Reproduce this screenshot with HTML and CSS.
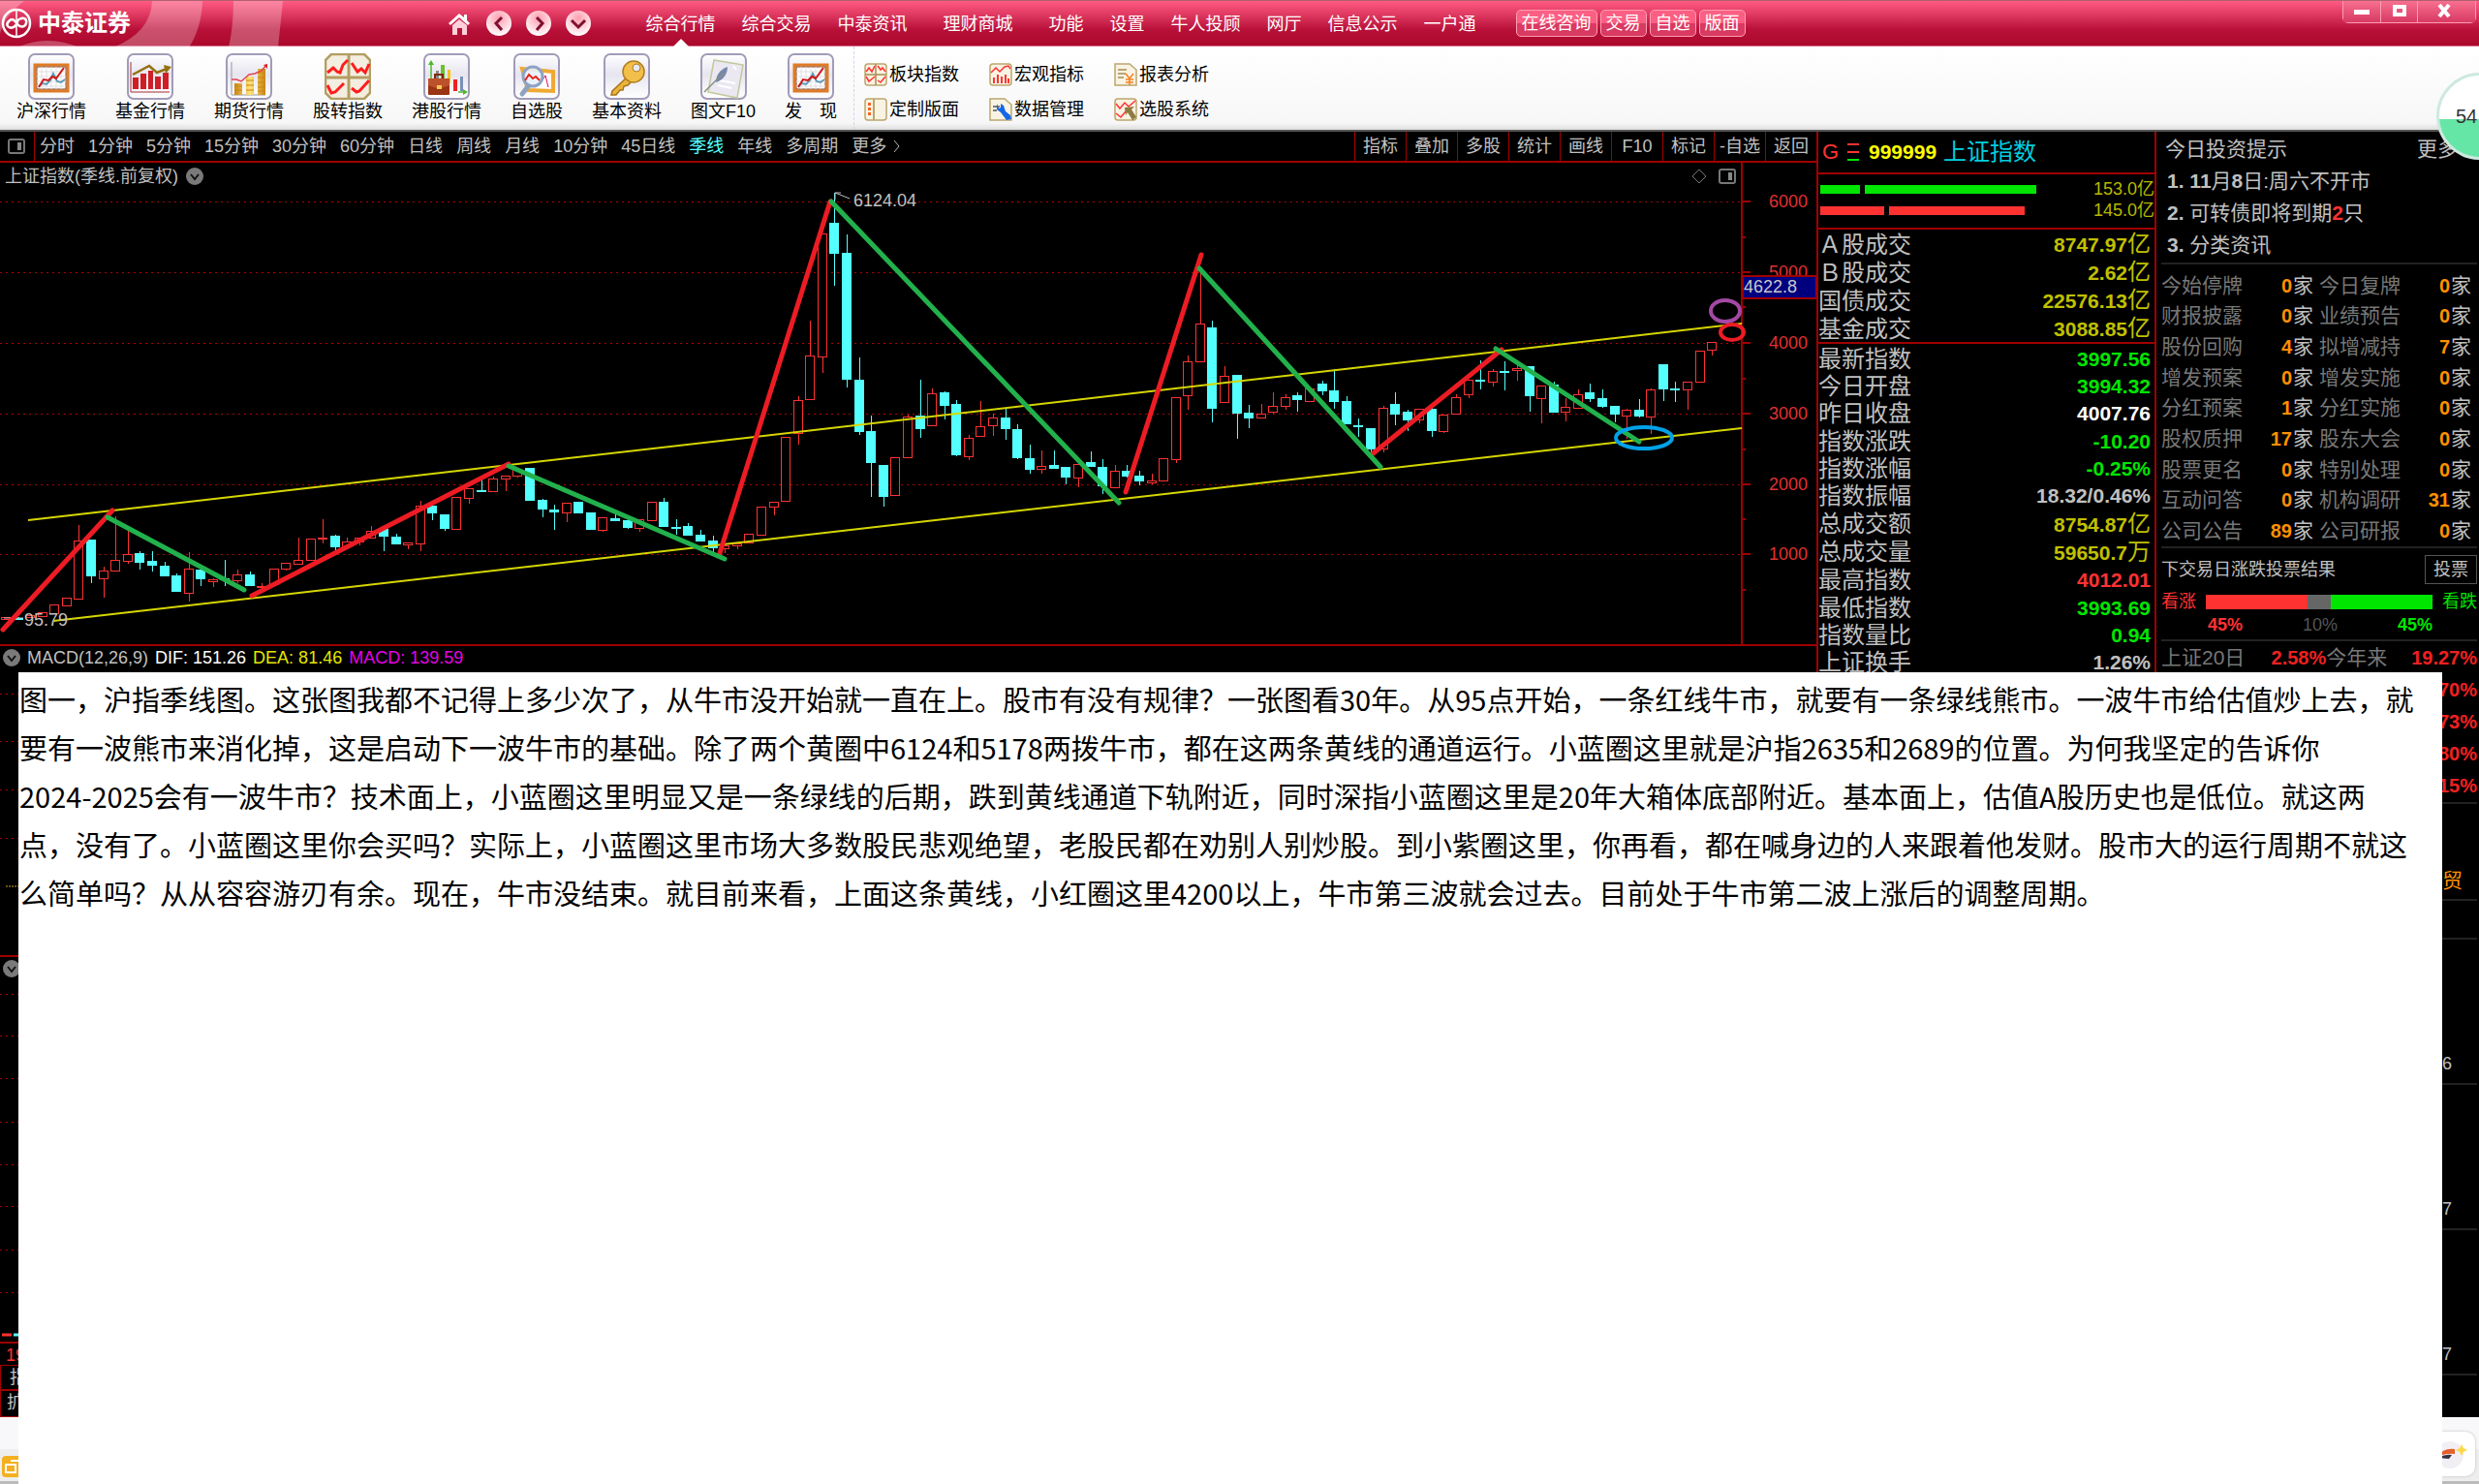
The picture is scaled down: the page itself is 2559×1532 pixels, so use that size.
FILE: index.html
```html
<!DOCTYPE html>
<html lang="zh-CN">
<head>
    <meta charset="UTF-8">
    <meta name="viewport" content="width=device-width, initial-scale=1.0">
    <title>中泰证券</title>
    <link rel="stylesheet" href="styles.css">
</head>
<body>

<svg class="symbols" aria-hidden="true">
    <defs>
        <linearGradient id="tile" x1="0" y1="0" x2="0" y2="1"><stop offset="0" stop-color="#fff"/><stop offset=".45" stop-color="#e6e5f0"/><stop offset="1" stop-color="#fff"/></linearGradient>
        <linearGradient id="gold" x1="0" y1="0" x2="1" y2="0"><stop offset="0" stop-color="#c98512"/><stop offset=".5" stop-color="#ffe27a"/><stop offset="1" stop-color="#c98512"/></linearGradient>
        <radialGradient id="ball" cx=".5" cy=".3" r=".7"><stop offset="0" stop-color="#ff9dae"/><stop offset="1" stop-color="#fff"/></radialGradient>
    </defs>
    <symbol id="frame" viewBox="0 0 48 48"><rect x="1" y="1" width="46" height="46" rx="6" fill="url(#tile)" stroke="#a29bb8" stroke-width="2"/></symbol>
    <symbol id="i-board" viewBox="0 0 48 48">
        <use href="#frame"/>
        <rect x="7" y="12" width="34" height="27" fill="#fff" stroke="#e07b24" stroke-width="3"/>
        <rect x="9" y="14" width="30" height="23" fill="none" stroke="#8a3d10"/>
        <path d="M14 14v23M19 14v23M24 14v23M29 14v23M34 14v23M9 19h30M9 24h30M9 29h30M9 34h30" stroke="#dfdfe4" fill="none"/>
        <path d="M11 34l4-3 4 1 4-4 3-7 4 8 4 1 4-3" fill="none" stroke="#5d9bb8" stroke-width="2"/>
        <path d="M11 35l5-8 5 1 4-4 4 2 8-11" fill="none" stroke="#d01818" stroke-width="2"/>
    </symbol>
    <symbol id="i-fund" viewBox="0 0 48 48">
        <use href="#frame"/>
        <path d="M4 9v31h40" fill="none" stroke="#a33" stroke-width="1"/>
        <path d="M6 25h6v12H6zM14 21h6v16h-6zM22 18h5v19h-5zM29 24h6v13h-6zM37 20h6v17h-6z" fill="#cf1f25"/>
        <path d="M6 22l17-9 8 7 10-4" fill="none" stroke="#94700f" stroke-width="2.5"/><path d="M38 12l8 2-6 7z" fill="#94700f"/>
    </symbol>
    <symbol id="i-futures" viewBox="0 0 48 48">
        <use href="#frame"/>
        <path d="M6 9v34h35" fill="none" stroke="#999"/>
        <path d="M9 31h8v12H9zM21 24h8v19h-8zM33 16h8v27h-8z" fill="url(#gold)"/>
        <path d="M9 34h8M9 38h8M21 28h8M21 33h8M21 38h8M33 20h8M33 25h8M33 30h8M33 35h8M33 39h8" stroke="#c98512"/>
        <path d="M6 27h5l5 2 8-7 6-1 7-3 5-6" fill="none" stroke="#dd4455" stroke-width="1.5"/><path d="M39 12l4-1v5z" fill="#d22"/>
    </symbol>
    <symbol id="i-grid" viewBox="0 0 48 48">
        <path d="M7 1h34l6 6v34l-6 6H7l-6-6V7z" fill="#f3eee0" stroke="#b39d62" stroke-width="2.5"/>
        <path d="M25 1v46M1 25h46" stroke="#b39d62" stroke-width="3"/>
        <path d="M3 20l6-5 4 4 3 1 3-8 5-5M28 10l6 9 4-3 4 4 4-9M3 33l4 8 4-1 9-9M28 36l5 4 3-1 10-11" fill="none" stroke="#ff1d1d" stroke-width="3"/>
    </symbol>
    <symbol id="i-hk" viewBox="0 0 48 48">
        <use href="#frame"/>
        <path d="M8 26V10M36 40h8" stroke="#4db82e" stroke-width="1.5"/><path d="M8 7l3 5H5zM46 40l-5-3v6z" fill="#4db82e"/>
        <path d="M13 18h3v8h-3z" fill="#888"/><path d="M18 12h4v14h-4z" fill="#6cc22c"/><path d="M25 17h3v14h-3z" fill="#f7c11e"/><path d="M31 27h4v12h-4z" fill="#e22"/><path d="M38 24h3v15h-3z" fill="#7b92b5"/>
        <rect x="5" y="26" width="22" height="17" rx="1" fill="#9a3412"/><path d="M5 26h22v7l-11 4-11-4z" fill="#bd512b"/><path d="M12 26v-4h8v4" fill="none" stroke="#7d2a10" stroke-width="2"/><rect x="14" y="33" width="5" height="4" fill="#f4c95a"/>
    </symbol>
    <symbol id="i-watch" viewBox="0 0 48 48">
        <use href="#frame"/>
        <path d="M9 16l32 3v20l-26-1z" fill="#fff" stroke="#efa932" stroke-width="4"/><path d="M29 29l4-6 3 12" fill="none" stroke="#e05" />
        <path d="M16 33l-7 9" stroke="#8fa3bd" stroke-width="5" stroke-linecap="round"/>
        <circle cx="20" cy="24" r="10" fill="#e8f1fb" fill-opacity=".9" stroke="#8da3c4" stroke-width="3"/>
        <path d="M12 28l4-6 4 4 3-2 4 4" fill="none" stroke="#e8241d" stroke-width="2"/>
    </symbol>
    <symbol id="i-key" viewBox="0 0 48 48">
        <use href="#frame"/>
        <path d="M24 25L9 39l-1 4h5l4-5h3l1-4 4-1 4-4" fill="#e9b53d" stroke="#a8741a" stroke-width="1.5"/>
        <circle cx="31" cy="19" r="11" fill="#f2c04a" stroke="#b27d20" stroke-width="1.5"/><circle cx="34" cy="15" r="4" fill="#e9e8f0" stroke="#b27d20"/>
    </symbol>
    <symbol id="i-note" viewBox="0 0 48 48">
        <use href="#frame"/>
        <path d="M14 7l30 5-6 34-30-6z" fill="#ebe8f2" stroke="#c3c79b" stroke-width="1.5"/>
        <path d="M20 28l16 3M18 33l14 3M34 13l3 4" stroke="#fff" stroke-width="2"/>
        <path d="M28 14c-9 3-12 10-12 16 7-2 12-8 12-16z" fill="#7788ad"/><path d="M24 20L4 40" stroke="#85907f" stroke-width="1.5"/>
    </symbol>
    <symbol id="m-page" viewBox="0 0 24 24"><rect x="1" y="1" width="22" height="22" rx="3" fill="#f8f3e3" stroke="#bba66d" stroke-width="1.5"/></symbol>
    <symbol id="m-grid" viewBox="0 0 24 24"><use href="#m-page"/><path d="M12 1v22M1 12h22" stroke="#a48d50" stroke-width="1.5"/><path d="M2 9l3-4 3 4 3-6M14 3l3 4 2-2 3 4M2 14l3 5 6-5M14 18l3 2 5-6" fill="none" stroke="#f33" stroke-width="1.5"/></symbol>
    <symbol id="m-macro" viewBox="0 0 24 24"><use href="#m-page"/><path d="M2 10l5-5 4 4 5-5 4-1 2 3" fill="none" stroke="#f33" stroke-width="1.5"/><path d="M5 21v-6M9 21v-9M13 21v-7M17 21v-9M20 21v-5" stroke="#f33" stroke-width="2"/></symbol>
    <symbol id="m-report" viewBox="0 0 24 24"><path d="M1 1h15l7 6v16H1z" fill="#f8f3e3" stroke="#bba66d" stroke-width="1.5"/><path d="M4 7h9M4 11h8M4 15h6" stroke="#a48d50" stroke-width="1.5"/><path d="M12 11l4 5 4-5M16 16v7M12 17h8M12 20h8" fill="none" stroke="#f6821f" stroke-width="1.5"/></symbol>
    <symbol id="m-layout" viewBox="0 0 24 24"><use href="#m-page"/><path d="M10 1v22" stroke="#bba66d" stroke-width="2"/><path d="M4 5h3v3H4zM4 10h3v3H4zM4 15h3v3H4z" fill="#f6641f"/></symbol>
    <symbol id="m-data" viewBox="0 0 24 24"><path d="M1 1h15l7 6v16H1z" fill="#f8f3e3" stroke="#bba66d" stroke-width="1.5"/><path d="M4 9h7M4 13h4" stroke="#555" stroke-width="1.5"/><path d="M8 6v6l4 3 6 8 5-1-1-4-5-4-2-6-3-2v4l-2 1z" fill="#1667e8"/></symbol>
    <symbol id="m-pick" viewBox="0 0 24 24"><use href="#m-page"/><path d="M2 6l4 5 5-6 4 4 7-6M2 16l5 4 5-6 4-2" fill="none" stroke="#f33" stroke-width="1.5"/><path d="M11 10l10-1-3 3 5 8-4 3-5-8-2 3z" fill="#8f7a40"/></symbol>
    <symbol id="v-down" viewBox="0 0 18 18"><circle cx="9" cy="9" r="9" fill="#7a7a7a"/><path d="M5 7l4 5 4-5" fill="none" stroke="#111" stroke-width="2"/></symbol>
    <symbol id="panel" viewBox="0 0 18 16"><rect x="1" y="1" width="16" height="14" rx="2" fill="none" stroke="#777" stroke-width="2"/><rect x="10" y="4" width="4" height="8" fill="#888"/></symbol>
</svg>

<div class="terminal">
    <header class="titlebar">
        <svg class="art" width="320" height="48" aria-hidden="true">
            <path d="M0 0H25Q4 16 0 34zM18 48Q48 34 82 48zM157 0H209Q208 28 195 48H117Q156 32 157 0zM241 0H292L287 48H236Q241 26 241 0z" fill="#fff" fill-opacity=".27"/>
        </svg>
        <div class="brand">
            <svg width="32" height="32" viewBox="0 0 32 32" aria-hidden="true">
                <g fill="none" stroke="#fff"><circle cx="16" cy="16" r="14" stroke-width="2.5"/><path d="M16 2v7M16 23v7M16 9v14" stroke-width="1.5"/><path d="M19 12c5-3 8 0 7 4s-6 5-9 1-5-7-9-3 0 8 5 6 3-8 6-8" stroke-width="2.5"/></g>
            </svg>
            <strong>中泰证券</strong>
        </div>
        <div class="shortcuts">
            <button aria-label="首页"><svg width="27" height="27" viewBox="0 0 27 27"><path d="M13 3L2 13l2 2 9-8 9 8 2-2-3-3V4h-3v3z" fill="#fff"/><path d="M6 15l7-6 8 6v10h-5v-7h-5v7H6z" fill="#ffd0d9"/></svg></button>
            <button aria-label="后退"><svg width="27" height="27" viewBox="0 0 27 27"><circle cx="13" cy="13" r="13" fill="url(#ball)"/><path d="M16 7l-6 6 6 7" fill="none" stroke="#7d1030" stroke-width="3"/></svg></button>
            <button aria-label="前进"><svg width="27" height="27" viewBox="0 0 27 27"><circle cx="13" cy="13" r="13" fill="url(#ball)"/><path d="M11 7l6 6-6 7" fill="none" stroke="#7d1030" stroke-width="3"/></svg></button>
            <button aria-label="展开"><svg width="27" height="27" viewBox="0 0 27 27"><circle cx="13" cy="13" r="13" fill="url(#ball)"/><path d="M6 10l7 7 7-7" fill="none" stroke="#7d1030" stroke-width="3"/></svg></button>
        </div>
        <nav class="menu">
            <a href="#" class="current">综合行情</a>
            <a href="#">综合交易</a>
            <a href="#">中泰资讯</a>
            <a href="#" class="wide">理财商城</a>
            <a href="#" class="wide">功能</a>
            <a href="#">设置</a>
            <a href="#">牛人投顾</a>
            <a href="#">网厅</a>
            <a href="#">信息公示</a>
            <a href="#">一户通</a>
        </nav>
        <div class="pills">
            <button>在线咨询</button>
            <button>交易</button>
            <button>自选</button>
            <button>版面</button>
        </div>
        <div class="window-buttons">
            <button aria-label="最小化"><svg width="16" height="14"><path d="M0 6h16v5H0z" fill="#fff"/></svg></button>
            <button aria-label="还原"><svg width="16" height="14"><path d="M1 1h14v12H1zM5 5v4h6V5z" fill="#fff" fill-rule="evenodd"/></svg></button>
            <button class="close" aria-label="关闭"><svg width="16" height="14"><path d="M3 1l10 12M13 1L3 13" stroke="#fff" stroke-width="4"/></svg></button>
        </div>
    </header>

    <div class="toolbar">
        <div class="tools">
            <button><svg><use href="#i-board"/></svg>沪深行情</button>
            <button><svg><use href="#i-fund"/></svg>基金行情</button>
            <button><svg><use href="#i-futures"/></svg>期货行情</button>
            <button><svg><use href="#i-grid"/></svg>股转指数</button>
            <button><svg><use href="#i-hk"/></svg>港股行情</button>
            <button><svg><use href="#i-watch"/></svg>自选股</button>
            <button><svg><use href="#i-key"/></svg>基本资料</button>
            <button><svg><use href="#i-note"/></svg>图文F10</button>
            <button><svg><use href="#i-board"/></svg>发　现</button>
        </div>
        <div class="mini-tools">
            <button><svg><use href="#m-grid"/></svg>板块指数</button>
            <button><svg><use href="#m-macro"/></svg>宏观指标</button>
            <button><svg><use href="#m-report"/></svg>报表分析</button>
            <button><svg><use href="#m-layout"/></svg>定制版面</button>
            <button><svg><use href="#m-data"/></svg>数据管理</button>
            <button><svg><use href="#m-pick"/></svg>选股系统</button>
        </div>
    </div>

    <main class="workspace">
        <section class="chart-column">
            <div class="period-bar">
                <button class="toggle" aria-label="侧栏"><svg width="18" height="16"><use href="#panel"/></svg></button>
                <div class="periods">
                    <button>分时</button><button>1分钟</button><button>5分钟</button><button>15分钟</button><button>30分钟</button><button>60分钟</button><button>日线</button><button>周线</button><button>月线</button><button>10分钟</button><button>45日线</button><button class="active">季线</button><button>年线</button><button>多周期</button><button>更多<svg width="9" height="16"><path d="M2 2l5 6-5 6" fill="none" stroke="#bbb"/></svg></button>
                </div>
                <div class="chart-actions">
                    <button>指标</button><button>叠加</button><button>多股</button><button>统计</button><button>画线</button><button>F10</button><button>标记</button><button>-自选</button><button>返回</button>
                </div>
            </div>

            <div class="chart-head">
                <span>上证指数(季线.前复权)</span>
                <svg width="18" height="18"><use href="#v-down"/></svg>
                <span class="head-icons">
                    <svg width="16" height="16"><path d="M8 1l7 7-7 7-7-7z" fill="none" stroke="#777"/></svg>
                    <svg width="18" height="16"><use href="#panel"/></svg>
                </span>
            </div>

            <svg class="kline" viewBox="0 196 1875 469" role="img" aria-label="上证指数季线">
                <g class="grid-lines"><path d="M0 208H1798M0 281H1798M0 354H1798M0 427H1798M0 500H1798M0 572H1798"/></g>
                <g class="axis">
                    <path d="M1798 196V665M1798 208h9M1798 281h9M1798 354h9M1798 427h9M1798 500h9M1798 572h9M1798 245h4M1798 317h4M1798 391h4M1798 464h4M1798 536h4M1798 609h4"/>
                    <text x="1826" y="214">6000</text>
                    <text x="1826" y="287">5000</text>
                    <text x="1826" y="360">4000</text>
                    <text x="1826" y="433">3000</text>
                    <text x="1826" y="506">2000</text>
                    <text x="1826" y="578">1000</text>
                    <rect x="1799" y="285" width="76" height="23"/>
                    <text class="cursor-price" x="1800" y="302">4622.8</text>
                </g>
                <g id="candles"></g>
                <g class="channel"><path d="M29 537L1798 334M55 641L1798 442"/></g>
                <g class="labels">
                    <path d="M862 199l15 6M862 199h6M862 199v7M4 638h20"/>
                    <text x="881" y="213">6124.04</text>
                    <text x="25" y="646">95.79</text>
                </g>
                <g class="bull"><path d="M3 650L116 527M260 615L525 479M743 571L857 208M1162 508L1240 263M1415 470L1550 361"/></g>
                <g class="bear"><path d="M111 534L252 609M525 481L748 577M858 208L1155 519M1238 277L1425 482M1544 360L1692 456"/></g>
                <g class="rings">
                    <ellipse cx="1697" cy="452" rx="29" ry="11" stroke="#00a2e8"/>
                    <ellipse cx="1781" cy="321" rx="15" ry="11" stroke="#a349a4"/>
                    <ellipse cx="1788" cy="343" rx="12" ry="8" stroke="#ed1c24"/>
                </g>
            </svg>

            <div class="indicator-head">
                <svg width="18" height="18"><use href="#v-down"/></svg>
                <span>MACD(12,26,9)</span>
                <span class="dif">DIF: 151.26</span>
                <span class="dea">DEA: 81.46</span>
                <span class="macd">MACD: 139.59</span>
            </div>
            <svg class="pane macd-pane">
                <g class="grid-lines"><line y1="25" x2="100%" y2="25"/><line y1="74" x2="100%" y2="74"/><line y1="124" x2="100%" y2="124"/><line y1="174" x2="100%" y2="174"/></g>
                <line x1="6" y1="224" x2="100%" y2="224" stroke="#d8a020" stroke-dasharray="2 1"/>
            </svg>
            <div class="indicator-head volume-head">
                <svg width="18" height="18"><use href="#v-down"/></svg>
            </div>
            <svg class="pane volume-pane">
                <g class="grid-lines"><line y1="14" x2="100%" y2="14"/><line y1="57" x2="100%" y2="57"/><line y1="101" x2="100%" y2="101"/><line y1="146" x2="100%" y2="146"/><line y1="190" x2="100%" y2="190"/><line y1="233" x2="100%" y2="233"/><line y1="278" x2="100%" y2="278"/><line y1="322" x2="100%" y2="322"/></g>
                <path d="M2 366h10" stroke="#ff3232" stroke-width="3"/><path d="M14 366h10" stroke="#54ffff" stroke-width="3"/>
            </svg>
            <div class="time-axis">1990</div>
            <div class="bottom-tabs"><button>指标</button></div>
            <div class="bottom-tabs extended"><button>扩展</button></div>
        </section>

        <section class="quote-column">
            <h2><span class="flag">G</span><svg width="12" height="22"><path d="M0 3h12M0 11h12" stroke="#ff3232" stroke-width="2"/><path d="M0 19h12" stroke="#00e600" stroke-width="2"/></svg><b>999999</b><span class="index-name">上证指数</span></h2>
            <div class="depth">
                <div class="depth-row up"><i></i><i></i><span>153.0亿</span></div>
                <div class="depth-row down"><i></i><i></i><span>145.0亿</span></div>
            </div>
            <table class="turnover">
                <tr><th>Ａ股成交</th><td class="amount">8747.97<small>亿</small></td></tr>
                <tr><th>Ｂ股成交</th><td class="amount">2.62<small>亿</small></td></tr>
                <tr><th>国债成交</th><td class="amount">22576.13<small>亿</small></td></tr>
                <tr><th>基金成交</th><td class="amount">3088.85<small>亿</small></td></tr>
            </table>
            <table class="figures">
                <tr><th>最新指数</th><td class="fall">3997.56</td></tr>
                <tr><th>今日开盘</th><td class="fall">3994.32</td></tr>
                <tr><th>昨日收盘</th><td class="flat">4007.76</td></tr>
                <tr><th>指数涨跌</th><td class="fall">-10.20</td></tr>
                <tr><th>指数涨幅</th><td class="fall">-0.25%</td></tr>
                <tr><th>指数振幅</th><td>18.32/0.46%</td></tr>
                <tr><th>总成交额</th><td class="amount">8754.87<small>亿</small></td></tr>
                <tr><th>总成交量</th><td class="amount">59650.7<small>万</small></td></tr>
                <tr><th>最高指数</th><td class="rise">4012.01</td></tr>
                <tr><th>最低指数</th><td class="fall">3993.69</td></tr>
                <tr><th>指数量比</th><td class="fall">0.94</td></tr>
                <tr><th>上证换手</th><td>1.26%</td></tr>
            </table>
        </section>

        <aside class="tips-column">
            <div class="tips-head"><span>今日投资提示</span><a href="#">更多</a></div>
            <ul class="tips">
                <li><b>1.</b> <b>11</b>月<b>8</b>日:周六不开市</li>
                <li><b>2.</b> 可转债即将到期<b class="rise">2</b>只</li>
                <li><b>3.</b> 分类资讯</li>
            </ul>
            <table class="events">
                <tr><th>今始停牌</th><td><b>0</b>家</td><th>今日复牌</th><td><b>0</b>家</td></tr>
                <tr><th>财报披露</th><td><b>0</b>家</td><th>业绩预告</th><td><b>0</b>家</td></tr>
                <tr><th>股份回购</th><td><b>4</b>家</td><th>拟增减持</th><td><b>7</b>家</td></tr>
                <tr><th>增发预案</th><td><b>0</b>家</td><th>增发实施</th><td><b>0</b>家</td></tr>
                <tr><th>分红预案</th><td><b>1</b>家</td><th>分红实施</th><td><b>0</b>家</td></tr>
                <tr><th>股权质押</th><td><b>17</b>家</td><th>股东大会</th><td><b>0</b>家</td></tr>
                <tr><th>股票更名</th><td><b>0</b>家</td><th>特别处理</th><td><b>0</b>家</td></tr>
                <tr><th>互动问答</th><td><b>0</b>家</td><th>机构调研</th><td><b>31</b>家</td></tr>
                <tr><th>公司公告</th><td><b>89</b>家</td><th>公司研报</th><td><b>0</b>家</td></tr>
            </table>
            <div class="vote">
                <div class="vote-head"><span>下交易日涨跌投票结果</span><button>投票</button></div>
                <div class="vote-row">
                    <span class="rise">看涨</span>
                    <div class="vote-bar"><i style="width:45%"></i><i style="width:10%"></i><i style="width:45%"></i></div>
                    <span class="fall">看跌</span>
                </div>
                <div class="vote-share"><b class="rise">45%</b><span>10%</span><b class="fall">45%</b></div>
            </div>
            <table class="returns">
                <tr><th>上证20日</th><td>2.58%</td><th>今年来</th><td>19.27%</td></tr>
                <tr><td colspan="4">70%</td></tr>
                <tr><td colspan="4">73%</td></tr>
                <tr><td colspan="4">80%</td></tr>
                <tr><td colspan="4">15%</td></tr>
            </table>
            <div class="topic">贸</div>
            <div class="blank"></div>
            <div class="news">06</div>
            <div class="news">07</div>
            <div class="news">07</div>
        </aside>
    </main>

    <footer class="statusbar">
        <button aria-label="窗口"><svg width="30" height="22" viewBox="0 0 30 22"><rect width="30" height="22" rx="4" fill="#f5b01f"/><path d="M4 9h10v8H4zM9 5h11v8" fill="none" stroke="#fff" stroke-width="2"/></svg></button>
        <button class="assistant" aria-label="助手"><svg width="34" height="34" viewBox="0 0 34 34"><circle cx="14" cy="18" r="14" fill="#f2eff4"/><path d="M0 20q8-10 19-8v5q-8-1-19 3z" fill="#e4602c"/><path d="M2 21q7-4 14-3l-3 4z" fill="#334"/><path d="M26 7l2 4 4 2-4 2-2 4-2-4-4-2 4-2z" fill="#ffd94a"/></svg></button>
    </footer>

    <div class="usage"><span>54</span></div>

    <article class="note">
        <p>图一，沪指季线图。这张图我都不记得上多少次了，从牛市没开始就一直在上。股市有没有规律？一张图看30年。从95点开始，一条红线牛市，就要有一条绿线熊市。一波牛市给估值炒上去，就<br>要有一波熊市来消化掉，这是启动下一波牛市的基础。除了两个黄圈中6124和5178两拨牛市，都在这两条黄线的通道运行。小蓝圈这里就是沪指2635和2689的位置。为何我坚定的告诉你<br>2024-2025会有一波牛市？技术面上，小蓝圈这里明显又是一条绿线的后期，跌到黄线通道下轨附近，同时深指小蓝圈这里是20年大箱体底部附近。基本面上，估值A股历史也是低位。就这两<br>点，没有了。小蓝圈这里你会买吗？实际上，小蓝圈这里市场大多数股民悲观绝望，老股民都在劝别人别炒股。到小紫圈这里，你再看，都在喊身边的人来跟着他发财。股市大的运行周期不就这<br>么简单吗？从从容容游刃有余。现在，牛市没结束。就目前来看，上面这条黄线，小红圈这里4200以上，牛市第三波就会过去。目前处于牛市第二波上涨后的调整周期。</p>
    </article>
</div>

<script src="chart.js"></script>
</body>
</html>
```

FILE: styles.css
```css
* {
    box-sizing: border-box;
}
body {
    margin: 0;
    background: #000;
    color: #c0c0c0;
    font-family: "Liberation Sans", "Noto Sans CJK SC", sans-serif;
    font-size: 18px;
    line-height: 24px;
}
button {
    padding: 0;
    border: 0;
    background: none;
    color: inherit;
    font: inherit;
    white-space: nowrap;
    cursor: pointer;
}
a {
    color: inherit;
    text-decoration: none;
}
svg {
    display: block;
    flex: none;
}
table {
    width: 100%;
    border-collapse: collapse;
}
th, td {
    padding: 0;
    font-weight: normal;
    text-align: left;
    white-space: nowrap;
}
.symbols {
    position: absolute;
    width: 0;
    height: 0;
}
.terminal {
    position: relative;
    display: flex;
    flex-direction: column;
    min-height: 100vh;
    overflow: hidden;
}
.rise {
    color: #ff3232;
}
.fall {
    color: #00e600;
}
.flat {
    color: #fff;
}

/* title bar */
.titlebar {
    position: relative;
    display: flex;
    align-items: center;
    height: 48px;
    background: linear-gradient(#ff5a82, #e03a62 30%, #b81038 65%, #ac082c);
    border-top: 1px solid #b06070;
    border-bottom: 1px solid #d8688a;
    color: #fff;
}
.art {
    position: absolute;
    left: 0;
    top: 0;
}
.brand {
    position: relative;
    flex: 0 0 18%;
    display: flex;
    align-items: center;
    gap: 6px;
    padding-left: 1px;
    font-size: 24px;
}
.shortcuts {
    display: flex;
    gap: 14px;
}
.menu {
    display: flex;
    align-self: stretch;
    gap: 27px;
    margin-left: 56px;
    line-height: 48px;
}
.menu .wide {
    margin-left: 10px;
}
.menu .current {
    position: relative;
}
.menu .current::after {
    content: "";
    position: absolute;
    left: 50%;
    bottom: -1px;
    margin-left: -8px;
    border: 8px solid transparent;
    border-top: 0;
    border-bottom-color: #fff;
}
.pills {
    display: flex;
    gap: 3px;
    margin-left: 41px;
}
.pills button {
    height: 28px;
    padding: 0 5px;
    border: 1px solid #ff9db2;
    border-radius: 5px;
    background: linear-gradient(#fb5f83 50%, #d93a62 50%);
}
.window-buttons {
    display: flex;
    align-self: flex-start;
    margin: 0 3px 0 auto;
    border: 1px solid #ff9db2;
    border-top: 0;
    border-radius: 0 0 6px 6px;
}
.window-buttons button {
    display: flex;
    justify-content: center;
    align-items: center;
    width: 38px;
    height: 22px;
    padding-bottom: 2px;
    background: linear-gradient(#f7708f, #d83a63);
}
.window-buttons button + button {
    border-left: 1px solid #ff9db2;
}
.window-buttons .close {
    width: 60px;
    padding-right: 6px;
}

/* toolbar */
.toolbar {
    display: flex;
    height: 88px;
    padding-left: 2px;
    background: linear-gradient(#fff, #f7f7f7 92%, #ddd);
    border-bottom: 2px solid #555;
    color: #000;
}
.tools {
    display: flex;
    padding-top: 7px;
}
.tools button {
    display: flex;
    flex-direction: column;
    align-items: center;
    padding: 0 15px;
}
.tools svg {
    width: 48px;
    height: 48px;
}
.mini-tools {
    display: grid;
    grid-template-columns: repeat(3, 129px);
    grid-auto-rows: 36px;
    margin-left: 2px;
    padding: 11px 10px 0;
    border-left: 1px dashed #ccd6ee;
}
.mini-tools button {
    display: flex;
    align-items: center;
    gap: 2px;
}
.mini-tools svg {
    width: 24px;
    height: 24px;
}

/* workspace */
.workspace {
    flex: 1;
    display: grid;
    grid-template-columns: 1fr 351px 333px;
}
.chart-column {
    display: flex;
    flex-direction: column;
    min-width: 0;
}
.period-bar {
    display: flex;
    height: 32px;
    border-bottom: 2px solid #a00000;
}
.toggle {
    display: flex;
    align-items: center;
    width: 36px;
    padding-left: 8px;
    border-right: 1px solid #a00000;
}
.periods {
    display: flex;
    gap: 14px;
    padding-left: 5px;
}
.periods button {
    display: flex;
    align-items: center;
    gap: 6px;
}
.periods .active {
    color: #54ffff;
}
.chart-actions {
    display: flex;
    margin-left: auto;
}
.chart-actions button {
    width: 53px;
    border-left: 1px solid #a00000;
}
.chart-head {
    display: flex;
    align-items: center;
    gap: 8px;
    height: 28px;
    margin-right: 76px;
    padding: 0 5px;
    border-right: 2px solid #a00000;
}
.head-icons {
    display: flex;
    gap: 12px;
    margin-left: auto;
}
.kline {
    width: 100%;
    overflow: hidden;
}
.grid-lines {
    fill: none;
    stroke: #b00000;
    stroke-dasharray: 2 4;
    shape-rendering: crispEdges;
}
.axis path {
    fill: none;
    stroke: #a00000;
    stroke-width: 2;
}
.axis text {
    fill: #e03030;
}
.axis rect {
    fill: #00007f;
    stroke: #a00000;
    stroke-width: 2;
}
.axis .cursor-price {
    fill: #c8c8c8;
}
.up-candle {
    fill: #000;
    stroke: #ff3232;
}
.down-candle {
    fill: #54ffff;
    stroke: #54ffff;
}
.up-candle, .down-candle {
    shape-rendering: crispEdges;
}
.channel {
    stroke: #d6d600;
    stroke-width: 2;
}
.labels text {
    fill: #c0c0c0;
}
.labels path {
    fill: none;
    stroke: #c0c0c0;
}
.bull, .bear {
    fill: none;
    stroke-width: 5;
    stroke-linecap: round;
}
.bull {
    stroke: #ed1c24;
}
.bear {
    stroke: #22b14c;
}
.rings {
    fill: none;
    stroke-width: 4;
}
.indicator-head {
    display: flex;
    align-items: center;
    gap: 7px;
    height: 26px;
    padding-left: 3px;
    border-top: 2px solid #a00000;
}
.dif {
    color: #fff;
}
.dea {
    color: #e6e600;
}
.macd {
    color: #e600e6;
}
.pane {
    width: 100%;
}
.macd-pane {
    height: 295px;
}
.volume-pane {
    flex: 1;
}
.time-axis {
    height: 24px;
    padding-left: 6px;
    border-top: 2px solid #a00000;
    color: #ff3232;
}
.bottom-tabs {
    height: 26px;
    padding-left: 9px;
    border: 1px solid #a00000;
}
.extended {
    height: 28px;
    padding-left: 6px;
}

/* index quote */
.quote-column {
    border: solid #a00000;
    border-width: 0 2px;
}
.quote-column h2 {
    display: flex;
    align-items: center;
    gap: 10px;
    height: 44px;
    margin: 0;
    padding-left: 4px;
    border-bottom: 2px solid #a00000;
    font-size: 24px;
    font-weight: normal;
}
.quote-column h2 b {
    color: #ffff00;
    font-size: 21px;
}
.flag {
    width: 16px;
    color: #ff3232;
    font-size: 22px;
}
.index-name {
    margin-left: -3px;
    color: #00d0e0;
}
.depth {
    height: 57px;
    padding: 4px 0 0 2px;
    border-bottom: 2px solid #a00000;
}
.depth-row {
    display: flex;
    align-items: center;
    gap: 5px;
    height: 22px;
    color: #b8b800;
}
.depth-row i {
    width: 41px;
    height: 9px;
    background: #00e600;
}
.depth-row i + i {
    width: 177px;
}
.depth-row.down i {
    width: 66px;
    background: #ff3232;
}
.depth-row.down i + i {
    width: 140px;
}
.depth-row span {
    margin-left: auto;
}
.quote-column th {
    padding-top: 3px;
    font-size: 24px;
}
.quote-column td {
    padding: 3px 4px 0 0;
    font-size: 21px;
    font-weight: bold;
    text-align: right;
}
.quote-column small {
    font-size: 24px;
    font-weight: normal;
}
.quote-column .amount {
    color: #c0c000;
}
.turnover {
    height: 118px;
    border-bottom: 2px solid #a00000;
}
.figures {
    height: 342px;
}

/* tips */
.tips-column {
    padding: 0 2px 0 5px;
    font-size: 21px;
}
.tips-head {
    display: flex;
    justify-content: space-between;
    height: 34px;
    padding: 6px 20px 0 4px;
}
.tips {
    height: 103px;
    margin: 0;
    padding: 0 0 0 6px;
    border-bottom: 2px solid #222;
    list-style: none;
    line-height: 33px;
}
.events {
    height: 287px;
    margin-top: 6px;
    border-bottom: 2px solid #222;
    table-layout: fixed;
}
.events th {
    color: #777;
}
.events td {
    padding-right: 6px;
    text-align: right;
}
.events td b {
    margin-right: 1px;
    color: #ff9000;
    font-size: 20px;
}
.vote {
    height: 96px;
    padding-top: 7px;
    border-bottom: 2px solid #222;
    font-size: 18px;
}
.vote-head {
    display: flex;
    justify-content: space-between;
    align-items: center;
}
.vote-head button {
    height: 30px;
    padding: 0 8px;
    border: 1px solid #555;
}
.vote-row {
    display: flex;
    align-items: center;
    gap: 10px;
    margin-top: 6px;
}
.vote-bar {
    flex: 1;
    display: flex;
    height: 15px;
    background: #ff3232;
}
.vote-bar i + i {
    background: #666;
}
.vote-bar i + i + i {
    background: #00e600;
}
.vote-share {
    display: flex;
    justify-content: space-between;
    padding: 0 46px 0 48px;
    color: #555;
}
.returns {
    height: 168px;
    border-bottom: 2px solid #222;
}
.returns th {
    color: #777;
}
.returns td {
    color: #f02020;
    font-size: 20px;
    font-weight: bold;
    text-align: right;
}
.topic {
    height: 100px;
    padding: 67px 15px 0 0;
    border-bottom: 2px solid #222;
    color: #ff9000;
    text-align: right;
}
.blank {
    height: 40px;
    border-bottom: 2px solid #222;
}
.news {
    height: 150px;
    padding: 116px 26px 0 0;
    border-bottom: 2px solid #222;
    font-size: 18px;
    text-align: right;
}

/* status bar */
.statusbar {
    display: flex;
    justify-content: space-between;
    align-items: center;
    height: 69px;
    padding-left: 2px;
    background: linear-gradient(#f8f8fa 50%, #eeeeee 50%);
    border-bottom: 3px solid #bbb;
}
.statusbar button:first-child {
    margin-top: 36px;
}
.assistant {
    width: 66px;
    height: 46px;
    margin: 10px 4px 0 0;
    padding-left: 26px;
    border-radius: 10px;
    background: #fff;
    box-shadow: 0 0 3px #bbb;
}

/* usage ball on the window's edge */
.usage {
    position: absolute;
    top: 75px;
    right: -46px;
    width: 90px;
    height: 90px;
    padding-left: 17px;
    border: 3px solid #cde9df;
    border-radius: 50%;
    background: linear-gradient(#fff 54%, #66e6a6 54%);
    color: #333;
    font-size: 20px;
    line-height: 84px;
}

/* note laid over the lower panes */
.note {
    position: absolute;
    top: 694px;
    right: 38px;
    bottom: 0;
    left: 19px;
    padding: 2px 1px;
    background: #fff;
    color: #000;
    font-family: "Noto Sans CJK SC", sans-serif;
    font-size: 29px;
    line-height: 50px;
    white-space: nowrap;
}
.note p {
    margin: 0;
}
```

FILE: chart.js
```js
// one entry per quarter: direction, high, body top, body bottom, low
const bars = `r 637 637 639 639|c 637 638 639 639|r 635 635 637 637|r 632 632 636 636|r 624 624 633 633|r 617 617 625 625|r 542 558 618 618|c 557 557 594 602|r 585 589 597 617|r 533 578 589 589
r 546 572 579 582|c 569 571 580 588|c 569 579 583 590|c 580 584 594 594|c 592 594 610 610|r 570 587 612 621|c 588 588 597 605|r 597 598 600 606|c 578 597 598 605|r 588 593 599 602
c 590 593 604 604|r 602 605 606 608|r 587 587 603 603|r 581 581 587 589|r 555 578 582 582|r 556 556 578 578|r 536 555 556 561|c 552 553 564 568|r 555 559 564 564|r 555 555 559 563
r 543 548 555 555|c 546 546 553 569|c 551 554 561 562|r 560 560 562 567|r 517 522 561 569|c 522 522 529 537|c 531 531 545 548|r 513 513 546 546|r 504 504 514 520|c 495 506 507 508
r 492 494 507 507|r 491 491 494 507|r 484 484 491 493|c 483 483 516 517|c 515 516 525 534|c 521 526 528 547|r 519 519 529 539|c 518 518 529 529|c 529 529 546 546|r 534 534 547 549
c 527 535 537 537|c 536 537 544 546|r 536 536 545 549|r 518 518 537 537|c 514 518 543 544|c 536 544 545 552|c 540 543 552 552|c 547 552 558 559|c 553 558 565 570|r 563 563 566 571
r 561 561 563 567|r 551 551 560 560|r 523 523 552 552|r 518 518 523 532|r 451 451 517 517|r 409 413 447 459|r 331 367 412 412|r 241 241 368 385|c 199 230 261 295|c 242 261 391 400
c 369 392 445 449|c 429 445 477 513|c 480 480 512 523|r 472 472 511 511|r 428 430 472 472|c 392 429 442 452|r 401 406 439 439|c 404 405 418 433|c 413 417 469 471|r 449 452 471 475
r 414 440 450 450|r 427 431 439 450|c 421 431 442 454|c 438 443 472 474|c 459 473 484 489|r 465 481 484 489|c 465 480 483 484|c 482 482 492 500|r 479 479 493 503|c 466 477 481 481
c 474 482 501 510|r 480 486 503 503|c 480 486 491 493|c 486 491 496 501|r 489 496 498 500|r 473 473 496 496|r 410 410 474 478|r 367 373 408 423|r 280 334 373 373|c 331 338 421 436
r 378 388 415 415|c 387 387 426 453|c 418 426 431 442|r 417 427 431 431|r 405 419 425 427|r 407 410 419 423|c 405 408 412 425|r 401 401 414 415|c 393 396 403 408|c 381 403 414 422
c 409 414 437 437|c 432 439 440 451|c 442 442 463 470|r 419 421 463 467|c 405 417 427 439|c 423 425 433 445|r 422 422 433 437|c 420 422 444 451|r 428 428 445 447|r 407 410 427 427
r 392 392 407 411|c 372 392 393 402|r 381 383 394 399|c 373 383 384 403|r 377 380 382 393|c 378 378 408 425|r 398 398 411 437|c 394 397 425 425|r 411 420 425 435|r 402 407 421 421
c 396 405 411 415|c 402 411 419 421|c 419 419 427 436|r 422 423 429 453|c 412 423 429 431|r 401 402 430 448|c 376 376 401 414|c 394 401 402 415|r 394 394 402 423|r 362 362 394 394
r 353 353 361 367`.split(/[|\n]/);

const firstX = 6;
const step = 12.58;
const candles = document.getElementById("candles");

let markup = "";
bars.forEach((bar, index) => {
    const [side, high, top, bottom, low] = bar.split(" ");
    const x = Math.round(firstX + step * index);
    const name = side === "r" ? "up-candle" : "down-candle";
    markup += `<path class="${name}" d="M${x} ${high}V${top}M${x} ${bottom}V${low}M${x - 5} ${top}H${x + 4}V${bottom}H${x - 5}Z"/>`;
});
candles.innerHTML = markup;
```
